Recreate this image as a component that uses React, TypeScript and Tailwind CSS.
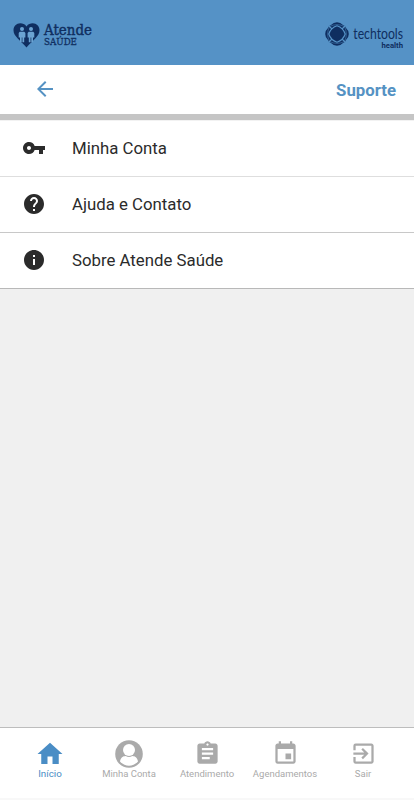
import type { ReactNode } from "react";
import {
  MdArrowBack,
  MdAssignment,
  MdEvent,
  MdExitToApp,
  MdHelp,
  MdHome,
  MdInfo,
  MdVpnKey,
} from "react-icons/md";

function AtendeLogo() {
  return (
    <div className="flex text-[#0f2e60]">
      <svg viewBox="0 0 27 25" className="mt-[1px] h-[25px] w-[27px]">
        <path
          d="M13.5 3.4C11.8 1 9.7.3 7.3.3 3.4.3.5 3.3.5 7.3c0 6 6.400 9.700 13 17.300 6.600-7.600 13-11.300 13-17.300 0-4-2.900-7-6.800-7-2.400 0-4.500.7-6.200 3.100z"
          fill="currentColor"
        />
        <g fill="#6ba3d2">
          <circle cx="9" cy="5.900" r="2" />
          <circle cx="18" cy="5.900" r="2" />
          <path d="M6.700 8.700h4.600l1.100 1.300v4.500h-1.200v4.700H7V14.500H5.700V10z" />
          <path d="M20.300 8.700h-4.600L14.600 10v4.500h1.200v4.700H20V14.500h1.300V10z" />
        </g>
        <path d="M9.100 14.500v5M17.900 14.500v5" stroke="currentColor" strokeWidth=".7" />
      </svg>
      <div className="ml-[4px] flex flex-col">
        <svg viewBox="0 0 53 15" className="h-[15px] w-[53px] overflow-visible" fill="currentColor">
          <text x="0" y="13" textLength="48" lengthAdjust="spacingAndGlyphs" stroke="currentColor" strokeWidth=".4" className="font-['DejaVu_Serif'] text-[14px]">
            Atende
          </text>
        </svg>
        <svg viewBox="0 0 53 11" className="h-[11px] w-[53px] overflow-visible" fill="currentColor">
          <text x="0" y="8.300" textLength="33" lengthAdjust="spacingAndGlyphs" stroke="currentColor" strokeWidth=".3" className="font-['DejaVu_Serif'] text-[10px]">
            SAÚDE
          </text>
        </svg>
      </div>
    </div>
  );
}

function TechtoolsLogo() {
  return (
    <div className="flex text-[#0f2e60]">
      <svg viewBox="0 0 24 24" className="h-6 w-6" fill="none">
        <path d="M12 .2Q15.500.2 18 3L20 4 21 6Q23.800 8.500 23.800 12T21 18L20 20 18 21Q15.500 23.800 12 23.800T6 21L4 20 3 18Q.2 15.500.2 12T3 6L4 4 6 3Q8.500.2 12 .2z" fill="currentColor" />
        <path d="M4.500 4.500Q12 .8 19.500 4.500 23.200 12 19.500 19.500 12 23.200 4.500 19.500.8 12 4.500 4.500z" stroke="#5592c6" strokeWidth=".5" />
        <path d="M12 3.800Q18.200 5.800 20.200 12 18.200 18.200 12 20.200 5.800 18.200 3.800 12 5.800 5.800 12 3.800z" stroke="#5592c6" strokeWidth="1.200" />
        <path d="M3.500 3.500 7 7M20.500 3.500 17 7M3.500 20.500 7 17M20.500 20.500 17 17" stroke="#5592c6" strokeWidth="1.200" />
      </svg>
      <div className="ml-[3px] flex flex-col">
        <svg viewBox="0 0 54 19" className="h-[19px] w-[54px] overflow-visible" fill="currentColor">
          <text x="1.300" y="17" textLength="49.700" lengthAdjust="spacingAndGlyphs" className="font-[Lato] text-[15px]">
            techtools
          </text>
        </svg>
        <svg viewBox="0 0 54 9" className="h-[9px] w-[54px] overflow-visible" fill="currentColor">
          <text x="29.500" y="6.800" textLength="21.500" lengthAdjust="spacingAndGlyphs" className="font-[Roboto] text-[7px] font-bold">
            health
          </text>
        </svg>
      </div>
    </div>
  );
}

function AccountIcon() {
  return (
    <svg viewBox="0 0 28 28" className="h-7 w-7">
      <circle cx="14" cy="14" r="13.800" fill="#aaaaaa" />
      <circle cx="14" cy="9.900" r="6" fill="#fff" />
      <path d="M5 21.500c.8-4.100 3-5.300 5.700-5.500 2 1.300 4.600 1.300 6.600 0 2.700.2 4.900 1.400 5.700 5.500-4.800 5.500-13.200 5.500-18 0z" fill="#fff" />
    </svg>
  );
}

function MenuRow({ icon, label, line }: { icon: ReactNode; label: string; line: string }) {
  return (
    <li className={`flex h-14 items-center border-b bg-white pb-[2px] pl-[22px] text-[#2b2b2b] ${line}`}>
      {icon}
      <span className="ml-[26px] pt-[1px] text-[16.800px] leading-6">{label}</span>
    </li>
  );
}

function Tab({ icon, label, active }: { icon: ReactNode; label: string; active?: boolean }) {
  return (
    <a className={`flex w-[78px] flex-col items-center ${active ? "pr-[2px] text-[#4a8dc5]" : "text-[#aaaaaa]"}`}>
      <span className="flex h-[29px] items-center justify-center">{icon}</span>
      <span className={`leading-3 whitespace-nowrap ${active ? "text-[9.800px]" : "text-[9.500px]"}`}>{label}</span>
    </a>
  );
}

export default function App() {
  return (
    <div className="flex h-[800px] w-[414px] flex-col overflow-hidden bg-[#f0f0f0] font-[Roboto,sans-serif]">
      <header className="flex h-[65px] shrink-0 justify-between bg-[#5592c6] pt-[22px] pr-[8px] pl-[13px]">
        <AtendeLogo />
        <TechtoolsLogo />
      </header>
      <div className="flex h-[55px] shrink-0 items-center justify-between border-b-[6px] border-[#c5c5c5] bg-white pr-[18px] pl-[33px] text-[#5592c3]">
        <MdArrowBack size={24} className="mb-[1px]" />
        <h1 className="pt-[1px] text-[16.800px] leading-6 font-bold">Suporte</h1>
      </div>
      <ul className="border-t border-[#f2f2f2]">
        <MenuRow icon={<MdVpnKey size={24} />} label="Minha Conta" line="border-[#dedede]" />
        <MenuRow icon={<MdHelp size={24} />} label="Ajuda e Contato" line="border-[#c8c8c8]" />
        <MenuRow icon={<MdInfo size={24} />} label="Sobre Atende Saúde" line="border-[#b8b8b8]" />
      </ul>
      <nav className="mt-auto flex h-[73px] shrink-0 border-t border-b-2 border-t-[#bdbdbd] border-b-[#f8f8f8] bg-white pt-[11px] pl-[12px]">
        <Tab icon={<MdHome size={30} />} label="Início" active />
        <Tab icon={<AccountIcon />} label="Minha Conta" />
        <Tab icon={<MdAssignment size={27} />} label="Atendimento" />
        <Tab icon={<MdEvent size={27} />} label="Agendamentos" />
        <Tab icon={<MdExitToApp size={27} />} label="Sair" />
      </nav>
    </div>
  );
}
